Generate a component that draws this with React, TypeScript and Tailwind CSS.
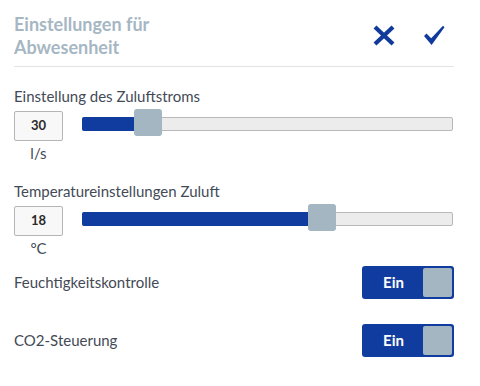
import React from "react";

const font = { fontFamily: '"Source Sans Pro", Lato, "Noto Sans", sans-serif' };

function Slider({ value, pct }: { value: number; pct: number }) {
  return (
    <div className="relative ml-[19px] mr-[1px] h-[30px] flex-1">
      <div className="absolute left-0 right-0 top-[6px] h-[14px] rounded-[2px] border border-[#b8b8b8] bg-[#ececec]" />
      <div
        className="absolute left-0 top-[6px] h-[14px] rounded-l-[2px] bg-[#0f3c9e]"
        style={{ width: `${pct}%` }}
      />
      <div
        className="absolute top-[-2px] h-[27px] w-[28px] rounded-[3px] bg-[#a4b6c1]"
        style={{ left: `${pct}%` }}
        aria-label={String(value)}
      />
    </div>
  );
}

function SliderSection({
  label,
  value,
  unit,
  pct,
}: {
  label: string;
  value: string;
  unit: string;
  pct: number;
}) {
  return (
    <div>
      <div className="text-[15px] leading-[20px] text-[#434a56]">{label}</div>
      <div className="mt-[5px] flex items-start">
        <div className="flex w-[49px] flex-col items-center">
          <div className="flex h-[30px] w-[49px] items-center justify-center rounded-[2px] border border-[#b5b5b5] bg-[#f8f8f8] text-[13px] font-bold text-[#2a2a2a]">
            {value}
          </div>
          <div className="mt-[2px] text-[15px] leading-[20px] text-[#434a56]">{unit}</div>
        </div>
        <Slider value={Number(value)} pct={pct} />
      </div>
    </div>
  );
}

function Toggle() {
  return (
    <div className="flex h-[33px] w-[92px] items-center rounded-[3px] bg-[#0f3c9e] p-[2px]">
      <div className="flex flex-1 items-center justify-center text-[15px] font-bold text-white">Ein</div>
      <div className="h-[29px] w-[29px] rounded-[2px] bg-[#a4b6c1]" />
    </div>
  );
}

export default function App() {
  return (
    <div className="h-[386px] w-[480px] bg-white pl-[14px] pr-[26px]" style={font}>
      <div className="flex items-start justify-between border-b border-[#e3e3e3] pb-[7px] pt-[13px]">
        <div className="text-[18px] font-bold leading-[23px] text-[#a6b7c3]">
          Einstellungen für
          <br />
          Abwesenheit
        </div>
        <div className="mt-[11px] flex">
          <button className="flex h-[22px] w-[40px] items-center justify-center">
            <svg width="22" height="21" viewBox="0 0 22 21">
              <path d="M2 2 L20 19 M20 2 L2 19" stroke="#123a9c" strokeWidth="4.2" strokeLinecap="butt" />
            </svg>
          </button>
          <button className="ml-[10px] flex h-[22px] w-[40px] items-center justify-center">
            <svg width="22" height="21" viewBox="0 0 22 21">
              <path
                d="M1 11 L3.5 8.6 L8.2 13.2 L20 0.8 L21.5 2.2 L8.6 20 Z"
                fill="#123a9c"
              />
            </svg>
          </button>
        </div>
      </div>
      <div className="mt-[19px]">
        <SliderSection label="Einstellung des Zuluftstroms" value="30" unit="l/s" pct={14} />
      </div>
      <div className="mt-[18px]">
        <SliderSection label="Temperatureinstellungen Zuluft" value="18" unit="°C" pct={61} />
      </div>
      <div className="mt-[8px] flex items-center justify-between">
        <span className="text-[15px] text-[#434a56]">Feuchtigkeitskontrolle</span>
        <Toggle />
      </div>
      <div className="mt-[25px] flex items-center justify-between">
        <span className="text-[15px] text-[#434a56]">CO2-Steuerung</span>
        <Toggle />
      </div>
    </div>
  );
}
